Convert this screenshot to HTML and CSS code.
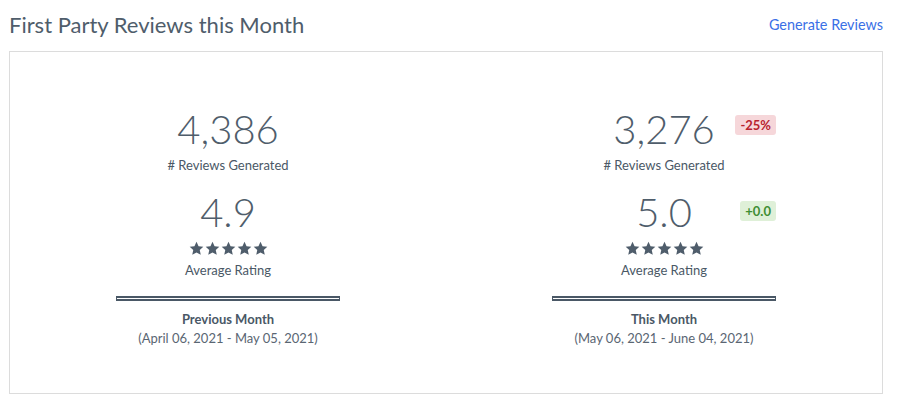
FILE: index.html
```html
<!DOCTYPE html>
<html>
<head>
<meta charset="utf-8">
<link rel="stylesheet" href="styles.css">
</head>
<body>
<svg width="0" height="0" class="defs">
  <defs>
    <symbol id="star" viewBox="0 0 24 24">
      <path d="M12 1.2l3.3 7 7.6.9-5.7 5.3 1.6 7.6L12 18.2 5.2 22l1.6-7.6L1.1 9.1l7.6-.9z"/>
    </symbol>
  </defs>
</svg>
<div class="page">
  <div class="header">
    <h1 class="title">First Party Reviews this Month</h1>
    <a class="link" href="#">Generate Reviews</a>
  </div>
  <div class="card">
    <div class="col">
      <div class="stat">
        <div class="big">4,386</div>
      </div>
      <div class="label">&#35; Reviews Generated</div>
      <div class="stat stat-rating">
        <div class="big">4.9</div>
      </div>
      <div class="stars">
        <svg class="star"><use href="#star"/></svg><svg class="star"><use href="#star"/></svg><svg class="star"><use href="#star"/></svg><svg class="star"><use href="#star"/></svg><svg class="star"><use href="#star"/></svg>
      </div>
      <div class="label label-rating">Average Rating</div>
      <div class="bar"></div>
      <div class="period">Previous Month</div>
      <div class="range">(April 06, 2021 - May 05, 2021)</div>
    </div>
    <div class="col">
      <div class="stat">
        <div class="big">3,276</div>
        <span class="badge badge-red">-25%</span>
      </div>
      <div class="label">&#35; Reviews Generated</div>
      <div class="stat stat-rating">
        <div class="big">5.0</div>
        <span class="badge badge-green">+0.0</span>
      </div>
      <div class="stars">
        <svg class="star"><use href="#star"/></svg><svg class="star"><use href="#star"/></svg><svg class="star"><use href="#star"/></svg><svg class="star"><use href="#star"/></svg><svg class="star"><use href="#star"/></svg>
      </div>
      <div class="label label-rating">Average Rating</div>
      <div class="bar"></div>
      <div class="period">This Month</div>
      <div class="range">(May 06, 2021 - June 04, 2021)</div>
    </div>
  </div>
</div>
</body>
</html>
```

FILE: styles.css
```css
* { box-sizing: border-box; }
html, body { margin: 0; padding: 0; background: #fff; }
body { font-family: Lato, "Open Sans", sans-serif; color: #4a5866; }
.defs { position: absolute; width: 0; height: 0; overflow: hidden; }
.page { padding: 0 24px 0 9px; }
.header {
  display: flex;
  justify-content: space-between;
  align-items: center;
  height: 51px;
  padding-bottom: 2px;
}
.title {
  margin: 0;
  font-size: 22px;
  font-weight: 400;
  color: #4f5d6b;
}
.link {
  color: #3a6fe6;
  text-decoration: none;
  font-size: 14.4px;
}
.card {
  border: 1px solid #dcdcdc;
  height: 343px;
  display: grid;
  grid-template-columns: 1fr 1fr;
  padding-top: 55px;
}
.col {
  display: flex;
  flex-direction: column;
  align-items: center;
}
.stat {
  position: relative;
  width: 224px;
  text-align: center;
  line-height: 44px;
}
.big {
  font-size: 40px;
  font-weight: 300;
  color: #4f5d6b;
}
.stat-rating { margin-top: 16px; }
.badge {
  position: absolute;
  right: 0;
  top: 8px;
  font-size: 13px;
  font-weight: 700;
  line-height: 20px;
  padding: 0 5px;
  border-radius: 3px;
}
.stat-rating .badge { top: 11px; }
.badge-red { background: #f6d7da; color: #b8232f; }
.badge-green { background: #dff0d8; color: #3f8e34; }
.label {
  font-size: 13px;
  line-height: 18px;
  margin-top: 5px;
  color: #4a5866;
}
.stars {
  display: flex;
  gap: 1px;
  margin-top: 7px;
  height: 15px;
}
.star {
  width: 15px;
  height: 15px;
  fill: #4f5d6b;
}
.label.label-rating { margin-top: 5px; }
.bar {
  width: 224px;
  height: 5px;
  border: 2px solid #4a5866;
  border-left-width: 1px;
  border-right-width: 1px;
  margin-top: 17px;
}
.period {
  font-size: 13px;
  font-weight: 700;
  margin-top: 9px;
  line-height: 18px;
}
.range {
  font-size: 13px;
  line-height: 18px;
  margin-top: 1px;
  color: #5a6673;
}
```
